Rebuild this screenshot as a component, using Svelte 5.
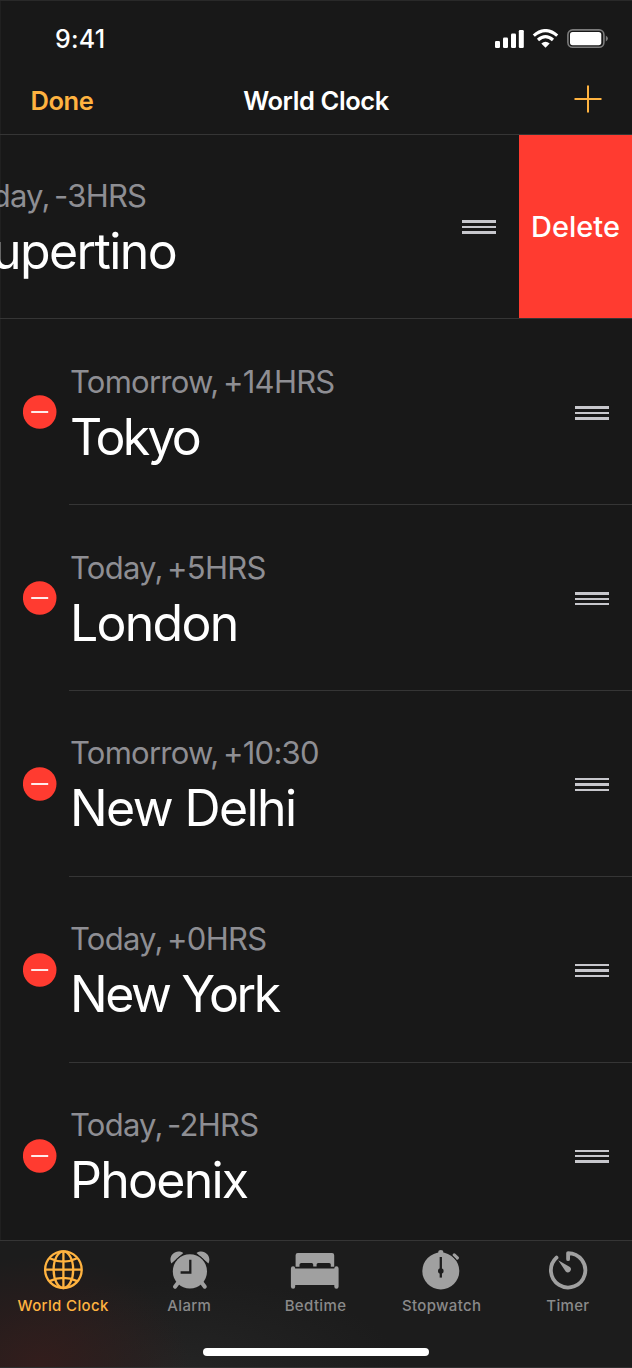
<script>
  const cities = [
    { offset: 'Today, -3HRS', name: 'Cupertino', tracking: -1.6, open: true },
    { offset: 'Tomorrow, +14HRS', name: 'Tokyo', tracking: -2.8 },
    { offset: 'Today, +5HRS', name: 'London', tracking: -1.75 },
    { offset: 'Tomorrow, +10:30', name: 'New Delhi', tracking: -1.6 },
    { offset: 'Today, +0HRS', name: 'New York', tracking: -2.4 },
    { offset: 'Today, -2HRS', name: 'Phoenix', tracking: -1.75 }
  ];
  const tabs = ['World Clock', 'Alarm', 'Bedtime', 'Stopwatch', 'Timer'];
  let active = $state('World Clock');
</script>

<div class="screen">
  <header>
    <div class="status">
      <span class="time">9:41</span>
      <svg class="signals" width="114" height="20" viewBox="0 0 114 20">
        <g fill="#fff">
          <rect x="1" y="12" width="5" height="7" rx="1.2" />
          <rect x="9" y="8.5" width="5" height="10.5" rx="1.2" />
          <rect x="17" y="4.5" width="5" height="14.5" rx="1.2" />
          <rect x="24.8" y="1" width="5" height="18" rx="1.2" />
          <path d="M51.5 18.7 L47.3 14.5 Q51.5 11.2 55.7 14.5 Z" />
        </g>
        <path d="M39.8 6.6 Q51.5 -3.4 63.2 6.6 M44 11 Q51.5 4.4 59 11" fill="none" stroke="#fff" stroke-width="3.2" />
        <rect x="73.9" y="0.9" width="36" height="17.4" rx="4.8" fill="none" stroke="#7c7c7c" stroke-width="1.6" />
        <rect x="76" y="3" width="31.3" height="13.2" rx="2.6" fill="#fff" />
        <path d="M111.8 6.6 Q114 8 114 9.6 Q114 11.2 111.8 12.6 Z" fill="#7c7c7c" />
      </svg>
    </div>
    <nav>
      <span class="done">Done</span>
      <span class="title">World Clock</span>
      <svg class="add" width="28" height="28" viewBox="0 0 28 28">
        <path d="M14 0.5V27.5M0.5 14H27.5" stroke="#ffb340" stroke-width="2" />
      </svg>
    </nav>
  </header>

  <main>
    {#each cities as city}
      <div class="row" class:open={city.open}>
        <div class="content">
          <svg class="minus" width="34" height="34" viewBox="0 0 34 34">
            <circle cx="16.7" cy="17" r="16.8" fill="#ff3b30" />
            <path d="M8.2 17H25.2" stroke="#fff" stroke-width="1.8" />
          </svg>
          <div class="words">
            <div class="offset">{city.offset}</div>
            <div class="city" style:letter-spacing="{city.tracking}px">{city.name}</div>
          </div>
          <div class="grip"><i></i><i></i><i></i></div>
        </div>
        {#if city.open}<div class="delete">Delete</div>{/if}
      </div>
    {/each}
  </main>

  <footer>
    <div class="tabs">
      {#each tabs as tab}
        <div class="tab" class:active={tab === active}>
          <svg width="50" height="42" viewBox="0 0 50 42">
            {#if tab === 'World Clock'}
              <g fill="none" stroke="currentColor" stroke-width="2.3">
                <circle cx="25.4" cy="20.7" r="18.3" />
                <ellipse cx="25.4" cy="20.7" rx="9.8" ry="18.3" />
                <path d="M25.4 2.4V39M7.1 20.7H43.7M11.6 9.3Q25.4 15.9 39.2 9.3M11.6 32.1Q25.4 25.5 39.2 32.1" />
              </g>
            {:else if tab === 'Alarm'}
              <path d="M7.3 14.4C3.7 6.7 12-.8 19.3 4ZM44.5 14.4C48.1 6.7 39.8-.8 32.5 4Z" fill="currentColor" />
              <circle cx="25.9" cy="22.4" r="18.3" fill="#1d1d1d" />
              <path d="M14.2 33.5L11 37.7M37.6 33.5L40.8 37.7" stroke="currentColor" stroke-width="4" stroke-linecap="round" />
              <circle cx="25.9" cy="22.4" r="17.1" fill="currentColor" />
              <path d="M26.3 10.8V23.5H16.6" fill="none" stroke="#1d1d1d" stroke-width="2.3" />
            {:else if tab === 'Bedtime'}
              <path d="M5.6 17.7V6.3Q5.6 4.1 7.8 4.1H42Q44.2 4.1 44.2 6.3V17.7H40.8V15.6Q40.8 14 39.2 14H28.2Q26.6 14 26.6 15.6V17.5H23.2V15.6Q23.2 14 21.6 14H11.4Q9.5 14 9.5 15.6V17.7Z" fill="currentColor" />
              <path d="M.9 19.4Q.9 17.2 3.1 17.2Q5.2 17.2 5.2 19.6H44.3Q44.3 17.2 46.4 17.2Q48.6 17.2 48.6 19.4V37.6Q48.6 39.8 46.4 39.8Q44.3 39.8 44.3 37.6V36H5.2V37.6Q5.2 39.8 3.1 39.8Q.9 39.8 .9 37.6Z" fill="currentColor" />
            {:else if tab === 'Stopwatch'}
              <g transform="translate(-1.4 0)">
                <circle cx="25.2" cy="22" r="18.5" fill="currentColor" />
                <path d="M22.6 5V3Q22.6 1 25.2 1Q27.8 1 27.8 3V5Z" fill="currentColor" />
                <path d="M38.6 5.9L41.8 9" stroke="currentColor" stroke-width="3.2" stroke-linecap="round" />
                <path d="M37.2 7.4L40.4 10.5" stroke="#1d1d1d" stroke-width="1" />
                <path d="M25.2 8V28.6" stroke="#1d1d1d" stroke-width="2.3" />
                <circle cx="25.2" cy="22" r="2.8" fill="#1d1d1d" />
              </g>
            {:else}
              <path d="M25.1 10.2V4.1A17.2 17.2 0 1 1 13.5 8.6" fill="none" stroke="currentColor" stroke-width="3.8" stroke-linecap="round" stroke-linejoin="round" />
              <path d="M15.2 11.2L26.9 18.1A3 3 0 1 1 22.7 22.5Z" fill="currentColor" />
            {/if}
          </svg>
          <span>{tab}</span>
        </div>
      {/each}
    </div>
    <div class="home"></div>
  </footer>
</div>

<style>
  :global(body) { background: #181818; }
  .screen {
    box-sizing: border-box;
    width: 632px;
    height: 1368px;
    display: flex;
    flex-direction: column;
    overflow: hidden;
    background: #181818;
    box-shadow: inset 0 1px #292929, inset 1px 0 #202020;
    color: #fff;
    font-family: Inter, sans-serif;
  }
  header { flex: none; box-sizing: border-box; height: 135px; border-bottom: 1px solid #353535; }
  .status { height: 67px; padding: 10px 24px 0 55px; box-sizing: border-box; display: flex; align-items: center; justify-content: space-between; }
  .time { font-size: 25px; font-weight: 550; padding-top: 1px; letter-spacing: 0.2px; }
  nav { height: 67px; display: grid; grid-template-columns: 1fr auto 1fr; align-items: center; padding: 0 30px; font-size: 25.5px; font-weight: 600; }
  .done { color: #ffb340; letter-spacing: -0.45px; padding-left: .5px; }
  .title { letter-spacing: -0.4px; }
  .add { justify-self: end; margin-top: -3px; }
  main { flex: 1; min-height: 0; overflow: hidden; }
  .row { height: 185.85px; display: flex; }
  .row.open { height: 184px; margin-bottom: .5px; box-sizing: border-box; border-bottom: 1px solid #353535; margin-left: -113px; }
  .content { position: relative; width: 632px; flex: none; display: flex; align-items: center; box-sizing: border-box; padding: 0 23px; }
  .row:not(.open) .content::after { content: ''; position: absolute; left: 69px; right: 0; bottom: 0; height: 1px; background: #353535; }
  .minus { flex: none; }
  .words { flex: 1; margin-left: 13px; padding-top: 4.5px; white-space: nowrap; }
  .offset { color: #8e8e93; font-size: 31px; line-height: 38px; letter-spacing: -.75px; word-spacing: -3.5px; }
  .city { margin-top: 6px; font-size: 50px; line-height: 60px; }
  .grip { width: 34px; display: flex; flex-direction: column; gap: 3px; padding-top: 1px; }
  .grip i { height: 2.4px; background: #c7c7cc; }
  .delete { flex: none; width: 113px; height: 184px; margin-top: -1px; display: flex; align-items: center; justify-content: center; background: #ff3b30; font-size: 29px; font-weight: 500; }
  footer { flex: none; box-sizing: border-box; height: 128px; border-top: 1px solid #353535; border-bottom: 1px solid #303030; display: flex; flex-direction: column; align-items: center; background: radial-gradient(ellipse 150px 110px at 40px 125px, #331d1c, #331d1c00), radial-gradient(ellipse 220px 90px at 180px 127px, #242424, #24242400), #1c1c1c; }
  .tabs { width: 631px; align-self: flex-start; display: grid; grid-template-columns: repeat(5, 1fr); }
  .tab { display: flex; flex-direction: column; align-items: center; padding-top: 8px; color: #a0a0a0; font-size: 15px; font-weight: 500; line-height: 20px; }
  .tab span { margin-top: 4.5px; color: #8a8a8a; letter-spacing: .35px; }
  .tab.active, .tab.active span { color: #ffb340; }
  .home { width: 226px; height: 8px; border-radius: 4px; background: #fff; margin-top: 32.5px; }
</style>
